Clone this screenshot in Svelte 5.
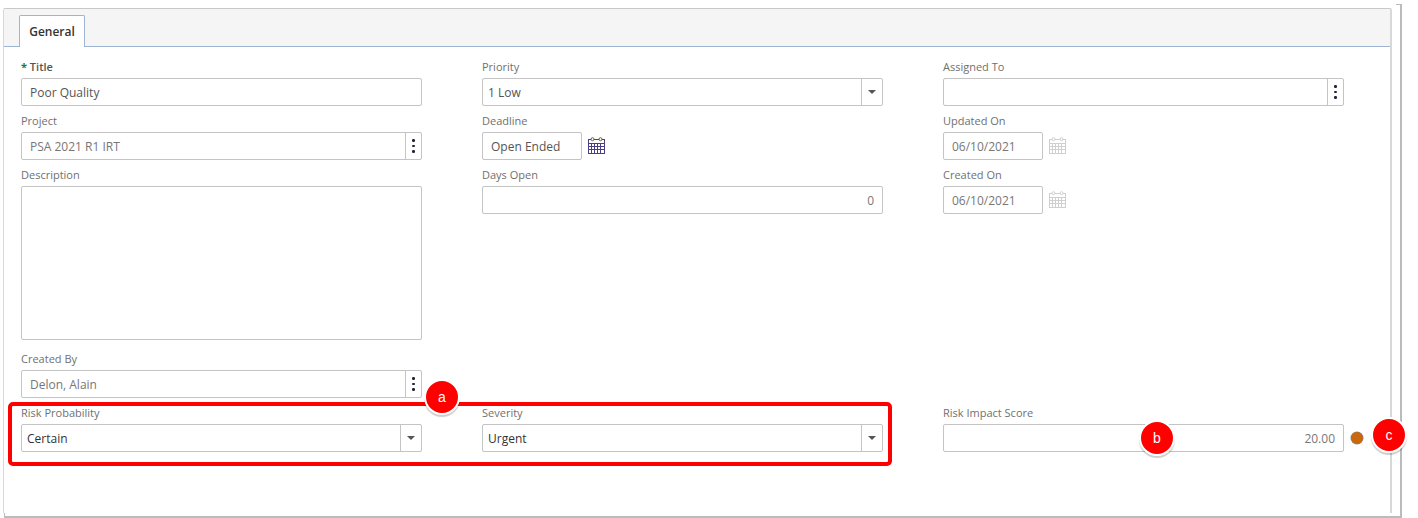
<script>
  const dots = [0, 1, 2];
  const cols = [3.5, 6.5, 9.5, 12.5];
  const lines = [6.5, 9.5, 12.5];
</script>

{#snippet calendar(muted)}
  <svg class="cal" class:muted width="17" height="17" viewBox="0 0 17 17">
    <rect x="0.5" y="2.5" width="16" height="14" fill="#fff" />
    {#each lines as y}
      <path d="M0.5 {y}H16.5" />
    {/each}
    {#each cols as x}
      <path d="M{x} 6.5V16.5" />
    {/each}
    <circle class="ring" cx="4.5" cy="2.2" r="1.5" />
    <circle class="ring" cx="12.5" cy="2.2" r="1.5" />
  </svg>
{/snippet}

{#snippet kebab()}
  <span class="addon">
    <span class="kebab">
      {#each dots as d}<i></i>{/each}
    </span>
  </span>
{/snippet}

{#snippet caret()}
  <span class="addon wide"><span class="caret"></span></span>
{/snippet}

<div class="frame">
  <div class="panel">
    <div class="tabbar">
      <div class="tab">General</div>
    </div>

    <div class="form">
      <div class="col">
        <div class="field">
          <div class="label strong"><span class="req">*</span> Title</div>
          <div class="box"><span class="val">Poor Quality</span></div>
        </div>
        <div class="field">
          <div class="label">Project</div>
          <div class="box"><span class="val ro">PSA 2021 R1 IRT</span>{@render kebab()}</div>
        </div>
        <div class="field tall">
          <div class="label">Description</div>
          <div class="box area"></div>
        </div>
        <div class="field">
          <div class="label">Created By</div>
          <div class="box"><span class="val ro">Delon, Alain</span>{@render kebab()}</div>
        </div>
        <div class="field">
          <div class="label">Risk Probability</div>
          <div class="box"><span class="val sel dark">Certain</span>{@render caret()}</div>
        </div>
      </div>

      <div class="col">
        <div class="field">
          <div class="label">Priority</div>
          <div class="box"><span class="val sel">1 Low</span>{@render caret()}</div>
        </div>
        <div class="field">
          <div class="label">Deadline</div>
          <div class="dateline">
            <div class="box date"><span class="val">Open Ended</span></div>
            {@render calendar(false)}
          </div>
        </div>
        <div class="field">
          <div class="label">Days Open</div>
          <div class="box"><span class="val ro num">0</span></div>
        </div>
        <div class="spacer"></div>
        <div class="field">
          <div class="label">Severity</div>
          <div class="box"><span class="val sel dark">Urgent</span>{@render caret()}</div>
        </div>
      </div>

      <div class="col">
        <div class="field">
          <div class="label">Assigned To</div>
          <div class="box"><span class="val"></span>{@render kebab()}</div>
        </div>
        <div class="field">
          <div class="label">Updated On</div>
          <div class="dateline">
            <div class="box date"><span class="val ro">06/10/2021</span></div>
            {@render calendar(true)}
          </div>
        </div>
        <div class="field">
          <div class="label">Created On</div>
          <div class="dateline">
            <div class="box date"><span class="val ro">06/10/2021</span></div>
            {@render calendar(true)}
          </div>
        </div>
        <div class="spacer"></div>
        <div class="field">
          <div class="label">Risk Impact Score</div>
          <div class="scoreline">
            <div class="box score"><span class="val ro num">20.00</span></div>
            <span class="dot"></span>
          </div>
        </div>
      </div>
    </div>
  </div>

  <!-- callouts drawn on top of the screenshot -->
  <div class="highlight"></div>
  <span class="badge a">a</span>
  <span class="badge b">b</span>
  <span class="badge c">c</span>
</div>

<style>
  :global(body) {
    margin: 0;
    background: #fff;
  }

  .frame {
    position: relative;
    width: 1418px;
    height: 518px;
    box-sizing: border-box;
    padding: 8px 0 0 3px;
    overflow: hidden;
    font-family: "Open Sans", sans-serif;
    font-size: 11px;
    color: #666;
  }

  /* cropped edge of the window behind the panel */
  .frame::before {
    content: "";
    position: absolute;
    left: 1396px;
    top: 4px;
    width: 4px;
    height: 513px;
    border-top: 1px solid #bbb;
    border-right: 2px solid #bbb;
  }

  .frame::after {
    content: "";
    position: absolute;
    left: 4px;
    top: 513px;
    width: 1396px;
    height: 3px;
    border-left: 1px solid #bbb;
    border-bottom: 2px solid #bbb;
  }

  .panel {
    width: 1389px;
    height: 505px;
    box-sizing: border-box;
    border: 1px solid #d8d8d8;
    border-top-color: #c8c8c8;
    border-bottom: none;
    border-right-width: 2px;
    border-radius: 2px 2px 0 0;
    background: #fff;
  }

  .tabbar {
    height: 38px;
    box-sizing: border-box;
    padding: 6px 0 0 15px;
    background: #f5f5f5;
    border-bottom: 1px solid #9db4d2;
  }

  .tab {
    width: 66px;
    height: 32px;
    box-sizing: border-box;
    border: 1px solid #9db4d2;
    border-bottom: none;
    border-radius: 2px 2px 0 0;
    background: #fff;
    color: #333;
    font-size: 12px;
    font-weight: 600;
    line-height: 31px;
    text-align: center;
  }

  .form {
    display: grid;
    grid-template-columns: 401px 401px 401px;
    column-gap: 60px;
    padding: 11px 0 0 17px;
  }

  .col {
    display: flex;
    flex-direction: column;
  }

  .field {
    height: 54px;
  }

  .field.tall {
    height: 184px;
  }

  .label {
    height: 20px;
    line-height: 18px;
    color: #707070;
  }

  .label.strong {
    color: #555;
    font-weight: 600;
  }

  .req {
    color: #1e7d3c;
    font-weight: 700;
  }

  .box {
    display: flex;
    height: 28px;
    box-sizing: border-box;
    border: 1px solid #c4c4c4;
    border-radius: 2px;
    background: #fff;
    font-size: 12px;
  }

  .box.area {
    height: 154px;
  }

  .val {
    flex: 1;
    padding: 0 8px;
    line-height: 27px;
    color: #555;
    white-space: nowrap;
  }

  .val.ro {
    color: #777;
  }

  .val.sel {
    padding-left: 5px;
  }

  .val.dark {
    color: #333;
  }

  .val.num {
    text-align: right;
  }

  .addon {
    display: flex;
    align-items: center;
    justify-content: center;
    width: 15px;
    border-left: 1px solid #c4c4c4;
  }

  .addon.wide {
    width: 20px;
  }

  .kebab {
    display: flex;
    flex-direction: column;
    gap: 3px;
  }

  .kebab i {
    display: block;
    width: 2.5px;
    height: 2.5px;
    border-radius: 50%;
    background: #223;
  }

  .caret {
    width: 0;
    height: 0;
    border-left: 4px solid transparent;
    border-right: 4px solid transparent;
    border-top: 4px solid #555;
  }

  .dateline {
    display: flex;
    align-items: center;
    gap: 6px;
  }

  .box.date {
    width: 100px;
  }

  .cal {
    margin-top: -1px;
    stroke: #4a3f85;
    stroke-width: 1;
    fill: none;
  }

  .cal.muted {
    stroke: #cfcfcf;
  }

  .ring {
    fill: #fff;
    stroke: #6b5a3a;
  }

  .cal.muted .ring {
    stroke: #cfcfcf;
  }

  .spacer {
    height: 184px;
  }

  .scoreline {
    display: flex;
    align-items: center;
  }

  .box.score {
    flex: none;
    width: 401px;
  }

  .dot {
    flex: none;
    width: 12px;
    height: 12px;
    margin-left: 7px;
    border-radius: 50%;
    background: #c8680f;
    box-shadow: 0 0 0 0.5px #888;
  }

  .highlight {
    position: absolute;
    left: 8px;
    top: 402px;
    width: 884px;
    height: 64px;
    box-sizing: border-box;
    border: 4px solid #f00;
    border-radius: 5px;
  }

  .badge {
    position: absolute;
    width: 32px;
    height: 32px;
    border-radius: 50%;
    background: #f00;
    border: 2px solid #fff;
    box-shadow: 0 2px 1px rgba(0, 0, 0, 0.2);
    color: #fff;
    font-family: "Liberation Sans", Arial, sans-serif;
    font-size: 14px;
    line-height: 32px;
    text-align: center;
  }

  .badge.a { left: 424px; top: 379px; }
  .badge.b { left: 1139px; top: 420px; }
  .badge.c { left: 1371px; top: 417px; }
</style>
